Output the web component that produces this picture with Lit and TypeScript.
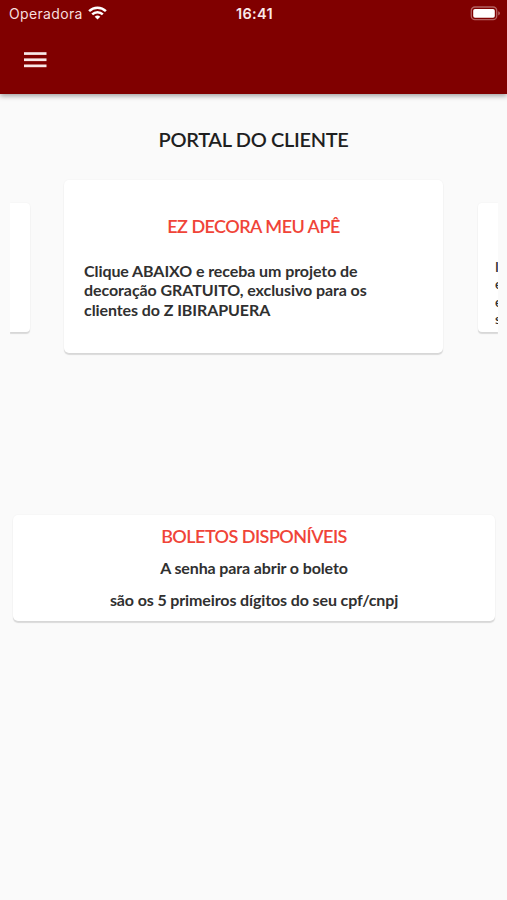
import { LitElement, html, css } from "lit";
import { customElement } from "lit/decorators.js";

@customElement("status-bar")
class StatusBar extends LitElement {
  static styles = css`
    :host {
      display: grid;
      grid-template-columns: 1fr auto 1fr;
      align-items: center;
      height: 27px;
      padding: 0 7px 0 9px;
      color: #f6dede;
      font-family: Inter, Roboto, sans-serif;
      font-weight: 400;
    }
    .carrier { display: flex; align-items: center; gap: 5px; font-size: 14px; letter-spacing: 0.35px; }
    .carrier svg { margin-top: -1px; }
    .clock { font-size: 14.5px; font-weight: 600; letter-spacing: 0.35px; color: #fbeaea; }
    .battery { justify-self: end; margin-top: -1px; }
    svg { display: block; }
  `;
  render() {
    return html`
      <div class="carrier">
        <span>Operadora</span>
        <svg width="19" height="14" viewBox="0 0 19 14" fill="none" stroke="#fff" stroke-width="2.5">
          <path d="M1.1 5.1A12 12 0 0 1 17.9 5.1" />
          <path d="M4.2 8.3A7.6 7.6 0 0 1 14.8 8.3" />
          <path d="M9.5 13.6L6.7 10.8A4 4 0 0 1 12.3 10.8Z" fill="#fff" stroke="none" />
        </svg>
      </div>
      <span class="clock">16:41</span>
      <svg class="battery" width="30" height="15" viewBox="0 0 30 15">
        <rect x="1.3" y="1" width="25.4" height="12.6" rx="3.6" fill="none" stroke="#b36060" stroke-width="1.3" />
        <rect x="3.2" y="2.9" width="21.6" height="8.8" rx="1.8" fill="#fff" />
        <path d="M28.2 5.2Q30 5.8 30 7.3T28.2 9.4Z" fill="#b36060" />
      </svg>
    `;
  }
}

@customElement("app-root")
class AppRoot extends LitElement {
  static styles = css`
    :host {
      display: block;
      height: 900px;
      overflow: hidden;
      background: #fafafa;
      color: #303030;
      font-family: Lato, sans-serif;
      font-weight: 600;
    }
    header {
      height: 94px;
      background: #800000;
      box-shadow: 0 2px 5px rgba(0, 0, 0, 0.36);
    }
    .toolbar { padding: 25px 0 0 24px; }
    .menu { display: block; }
    h1, h2, p { margin: 0; font-weight: inherit; }
    h1 {
      padding-top: 32px;
      text-align: center;
      font-size: 20px;
      line-height: 26px;
      letter-spacing: -0.33px;
      color: #1f1f1f;
    }
    .carousel {
      display: flex;
      align-items: center;
      justify-content: space-between;
      height: 180px;
      margin: 24px 9px 0 10px;
      box-sizing: border-box;
      overflow: hidden;
    }
    .card {
      background: #fff;
      border-radius: 5px;
      box-shadow: 0 2px 1px rgba(0, 0, 0, 0.13), 0 0 2px rgba(0, 0, 0, 0.05);
      box-sizing: border-box;
    }
    .side { width: 20px; height: 129px; flex: none; margin-top: 3px; }
    .previous { border-radius: 0 4px 4px 0; }
    .next {
      border-radius: 4px 0 0 4px;
      padding: 56px 0 0 17px;
      font-size: 13.5px;
      line-height: 17.4px;
      white-space: nowrap;
    }
    .next span { display: block; }
    .active { width: 379px; height: 173px; margin-right: 1px; padding: 35px 20px 0; }
    h2 { text-align: center; font-size: 18px; line-height: 22px; letter-spacing: -0.53px; color: #f04438; }
    .message {
      margin-top: 24px;
      font-size: 16px;
      font-weight: 700;
      line-height: 19.5px;
      letter-spacing: -0.08px;
      white-space: pre-line;
    }
    .invoices {
      height: 106px;
      margin: 159px 12px 0 13px;
      padding-top: 10px;
      text-align: center;
    }
    .invoices p { font-size: 16px; font-weight: 700; line-height: 32px; letter-spacing: -0.12px; }
    .invoices h2 { margin-bottom: 5px; }
  `;
  render() {
    return html`
      <header>
        <status-bar></status-bar>
        <div class="toolbar">
          <svg class="menu" width="23" height="16" viewBox="0 0 23 16" fill="#f8e8e8">
            <rect width="22.5" height="2.7" y="0.2" />
            <rect width="22.5" height="2.7" y="6.4" />
            <rect width="22.5" height="2.7" y="12.5" />
          </svg>
        </div>
      </header>
      <h1>PORTAL DO CLIENTE</h1>
      <section class="carousel">
        <div class="card side previous"></div>
        <article class="card active">
          <h2>EZ DECORA MEU APÊ</h2>
          <p class="message">${"Clique ABAIXO e receba um projeto de\ndecoração GRATUITO, exclusivo para os\nclientes do Z IBIRAPUERA"}</p>
        </article>
        <div class="card side next"><span>I</span><span>e</span><span>e</span><span>s</span></div>
      </section>
      <section class="card invoices">
        <h2>BOLETOS DISPONÍVEIS</h2>
        <p>A senha para abrir o boleto</p>
        <p>são os 5 primeiros dígitos do seu cpf/cnpj</p>
      </section>
    `;
  }
}
